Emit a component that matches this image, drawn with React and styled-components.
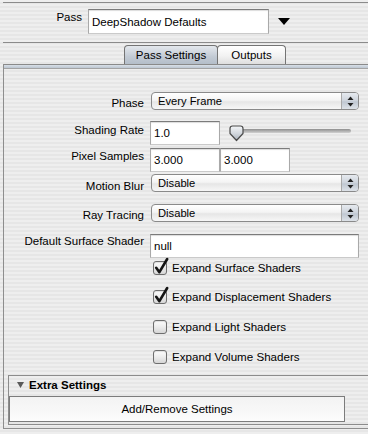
import React from "react";
import styled, { createGlobalStyle } from "styled-components";

const GlobalStyle = createGlobalStyle`
  html, body {
    margin: 0;
    padding: 0;
  }
  body {
    width: 368px;
    height: 434px;
    overflow: hidden;
    font-family: "Liberation Sans", Arial, sans-serif;
    color: #000;
    background: repeating-linear-gradient(
      to bottom,
      #eeeeee 0px,
      #eeeeee 2px,
      #e6e6e6 2px,
      #e6e6e6 4px
    );
  }
`;

const Page = styled.div`
  height: 434px;
  padding-top: 2px;
  box-sizing: border-box;
`;

const Rule = styled.div`
  margin-left: 3px;
  border-top: 1px solid #8b8b8b;
`;

const PassRow = styled.div`
  display: flex;
  align-items: flex-start;
  height: 39px;
  padding-top: 6px;
  box-sizing: border-box;
`;

const PassLabel = styled.div`
  width: 82px;
  margin-right: 6px;
  padding-top: 1px;
  text-align: right;
  font-size: 11.5px;
  line-height: 14px;
`;

const TextField = styled.input`
  width: ${(p) => p.$w}px;
  height: ${(p) => p.$h || 24}px;
  box-sizing: border-box;
  margin: 0;
  padding: 0 3px;
  border: 1px solid;
  border-color: #7b7b7b #a9a9a9 #cacaca #a9a9a9;
  background: #fff;
  box-shadow: inset 0 1px 1px rgba(0, 0, 0, 0.14);
  font-family: "Liberation Sans", Arial, sans-serif;
  font-size: 11.5px;
  color: #000;
  outline: none;
`;

const MenuArrow = styled.svg`
  margin-left: 9px;
  margin-top: 9px;
`;

const TabBar = styled.div`
  display: flex;
  align-items: flex-end;
  height: 21px;
  padding-left: 124px;
  padding-top: 2px;
  box-sizing: border-box;
`;

const Tab = styled.div`
  width: ${(p) => p.$w}px;
  height: 19px;
  box-sizing: border-box;
  margin-left: ${(p) => (p.$first ? 0 : -1)}px;
  border: 1px solid #747474;
  border-bottom: none;
  border-radius: 4px 4px 0 0;
  text-align: center;
  font-size: 11.5px;
  line-height: 18px;
  background: ${(p) =>
    p.$active
      ? "linear-gradient(to bottom, #e4e8ed, #c2cad4 60%, #b4bec9)"
      : "linear-gradient(to bottom, #ffffff, #f2f2f2 55%, #dedede)"};
`;

const Panel = styled.div`
  margin-left: 3px;
  border-left: 1px solid #8e8e8e;
  border-bottom: 1px solid #8e8e8e;
`;

const Band = styled.div`
  height: 5px;
  box-sizing: border-box;
  border-top: 1px solid #8a8a8a;
  border-bottom: 1px solid #a4a4a4;
  background: linear-gradient(to bottom, #d9e0e8, #bcc6d1);
`;

const PanelBody = styled.div`
  display: flex;
  flex-direction: column;
  padding-top: 23px;
  padding-bottom: 3px;
`;

const FieldRow = styled.div`
  display: flex;
  align-items: flex-start;
  margin-top: ${(p) => p.$top}px;
  height: ${(p) => p.$h}px;
`;

const FieldLabel = styled.div`
  width: 146px;
  padding-right: 6px;
  padding-top: ${(p) => p.$nudge}px;
  box-sizing: border-box;
  text-align: right;
  font-size: 11.5px;
  line-height: 13px;
  white-space: nowrap;
`;

const Popup = styled.div`
  display: flex;
  align-items: stretch;
  width: 208px;
  height: 18px;
  margin-left: 1px;
  box-sizing: border-box;
  border: 1px solid #8a8a8a;
  border-radius: 4px;
  background: linear-gradient(
    to bottom,
    #ffffff,
    #f4f4f4 45%,
    #e6e6e6 55%,
    #f7f7f7
  );
  overflow: hidden;
`;

const PopupText = styled.div`
  flex: 1;
  padding-left: 6px;
  font-size: 11.2px;
  line-height: 16px;
`;

const PopupArrows = styled.div`
  width: 16px;
  display: flex;
  align-items: center;
  justify-content: center;
  border-left: 1px solid #a9a9a9;
  background: linear-gradient(to bottom, #e6eaef, #cdd3db 50%, #bfc7d1 55%, #dde2e8);
`;

const Slider = styled.div`
  position: relative;
  width: 122px;
  height: 24px;
  margin-left: 9px;
`;

const SliderTrack = styled.div`
  position: absolute;
  top: 8px;
  left: 1px;
  right: 0;
  height: 4px;
  border-radius: 2px;
  background: linear-gradient(to bottom, #8f8f8f, #b5b5b5 60%, #d2d2d2);
`;

const SliderThumb = styled.svg`
  position: absolute;
  top: 4px;
  left: 0;
`;

const CheckRow = styled.div`
  display: flex;
  align-items: center;
  height: 14px;
  margin-top: ${(p) => p.$top}px;
  padding-left: 149px;
`;

const CheckBox = styled.div`
  position: relative;
  width: 14px;
  height: 14px;
  box-sizing: border-box;
  border: 1px solid #6e6e6e;
  border-radius: 3px;
  background: linear-gradient(to bottom, #fdfdfd, #ececec 50%, #d6d6d6);
  box-shadow: inset 0 1px 1px rgba(0, 0, 0, 0.12);
`;

const CheckMark = styled.svg`
  position: absolute;
  left: 0;
  top: -5px;
  overflow: visible;
`;

const CheckText = styled.div`
  margin-left: 5px;
  font-size: 11.6px;
  line-height: 14px;
  white-space: nowrap;
`;

const ExtraBox = styled.div`
  margin-top: 11px;
  margin-left: 4px;
  padding-bottom: 2px;
  border-top: 1px solid #8c8c8c;
  border-left: 1px solid #8c8c8c;
  border-bottom: 1px solid #8c8c8c;
`;

const ExtraHeader = styled.div`
  display: flex;
  align-items: flex-start;
  height: 20px;
  padding: 2px 0 0 8px;
  box-sizing: border-box;
  font-size: 11.5px;
  font-weight: bold;
  line-height: 14px;
`;

const Disclosure = styled.svg`
  margin-top: 4px;
  margin-right: 5px;
`;

const AddButton = styled.div`
  width: 336px;
  height: 26px;
  box-sizing: border-box;
  border: 1px solid #7c7c7c;
  background: linear-gradient(to bottom, #f3f3f3, #f7f7f7 50%, #fdfdfd);
  text-align: center;
  font-size: 11.5px;
  line-height: 24px;
`;

function Arrows() {
  return (
    <svg width="7" height="11" viewBox="0 0 7 11">
      <path d="M3.5 0.5 L6.5 4 H0.5 Z" fill="#222" />
      <path d="M3.5 10.5 L6.5 7 H0.5 Z" fill="#222" />
    </svg>
  );
}

function PopupMenu({ value }) {
  return (
    <Popup>
      <PopupText>{value}</PopupText>
      <PopupArrows>
        <Arrows />
      </PopupArrows>
    </Popup>
  );
}

function Check({ checked, label, top }) {
  return (
    <CheckRow $top={top}>
      <CheckBox>
        {checked && (
          <CheckMark width="14" height="18" viewBox="0 0 14 18">
            <path
              d="M2.2 10.8 L5.4 15.2 L13.2 2"
              fill="none"
              stroke="#151515"
              strokeWidth="2.6"
              strokeLinecap="round"
              strokeLinejoin="round"
            />
          </CheckMark>
        )}
      </CheckBox>
      <CheckText>{label}</CheckText>
    </CheckRow>
  );
}

export default function App() {
  return (
    <>
      <GlobalStyle />
      <Page>
        <Rule />
        <PassRow>
          <PassLabel>Pass</PassLabel>
          <TextField $w={181} $h={25} readOnly value="DeepShadow Defaults" />
          <MenuArrow width="12" height="7" viewBox="0 0 12 7">
            <path d="M0 0 H12 L6 7 Z" fill="#000" />
          </MenuArrow>
        </PassRow>
        <Rule />
        <TabBar>
          <Tab $w={94} $first $active>
            Pass Settings
          </Tab>
          <Tab $w={69}>Outputs</Tab>
        </TabBar>
        <Panel>
          <Band />
          <PanelBody>
            <FieldRow $top={0} $h={18}>
              <FieldLabel $nudge={5}>Phase</FieldLabel>
              <PopupMenu value="Every Frame" />
            </FieldRow>
            <FieldRow $top={11} $h={24}>
              <FieldLabel $nudge={3}>Shading Rate</FieldLabel>
              <TextField $w={70} readOnly value="1.0" />
              <Slider>
                <SliderTrack />
                <SliderThumb width="15" height="17" viewBox="0 0 15 17">
                  <defs>
                    <linearGradient id="thumb" x1="0" y1="0" x2="0" y2="1">
                      <stop offset="0" stopColor="#f4f6f8" />
                      <stop offset="0.5" stopColor="#d3d8de" />
                      <stop offset="1" stopColor="#a9b1bb" />
                    </linearGradient>
                  </defs>
                  <path
                    d="M3.5 1 H11.5 Q14 1 14 3.5 V8.5 L7.5 15.5 L1 8.5 V3.5 Q1 1 3.5 1 Z"
                    fill="url(#thumb)"
                    stroke="#4a4a4a"
                    strokeWidth="1.2"
                    strokeLinejoin="round"
                  />
                </SliderThumb>
              </Slider>
            </FieldRow>
            <FieldRow $top={3} $h={24}>
              <FieldLabel $nudge={2}>Pixel Samples</FieldLabel>
              <TextField $w={70} readOnly value="3.000" />
              <TextField $w={70} readOnly value="3.000" />
            </FieldRow>
            <FieldRow $top={2} $h={18}>
              <FieldLabel $nudge={6}>Motion Blur</FieldLabel>
              <PopupMenu value="Disable" />
            </FieldRow>
            <FieldRow $top={12} $h={18}>
              <FieldLabel $nudge={5}>Ray Tracing</FieldLabel>
              <PopupMenu value="Disable" />
            </FieldRow>
            <FieldRow $top={12} $h={24}>
              <FieldLabel $nudge={1}>Default Surface Shader</FieldLabel>
              <TextField $w={209} readOnly value="null" />
            </FieldRow>
            <Check top={3} checked label="Expand Surface Shaders" />
            <Check top={15} checked label="Expand Displacement Shaders" />
            <Check top={16} label="Expand Light Shaders" />
            <Check top={16} label="Expand Volume Shaders" />
            <ExtraBox>
              <ExtraHeader>
                <Disclosure width="7" height="6" viewBox="0 0 7 6">
                  <path d="M0 0 H7 L3.5 6 Z" fill="#5a5a5a" />
                </Disclosure>
                Extra Settings
              </ExtraHeader>
              <AddButton>Add/Remove Settings</AddButton>
            </ExtraBox>
          </PanelBody>
        </Panel>
      </Page>
    </>
  );
}
